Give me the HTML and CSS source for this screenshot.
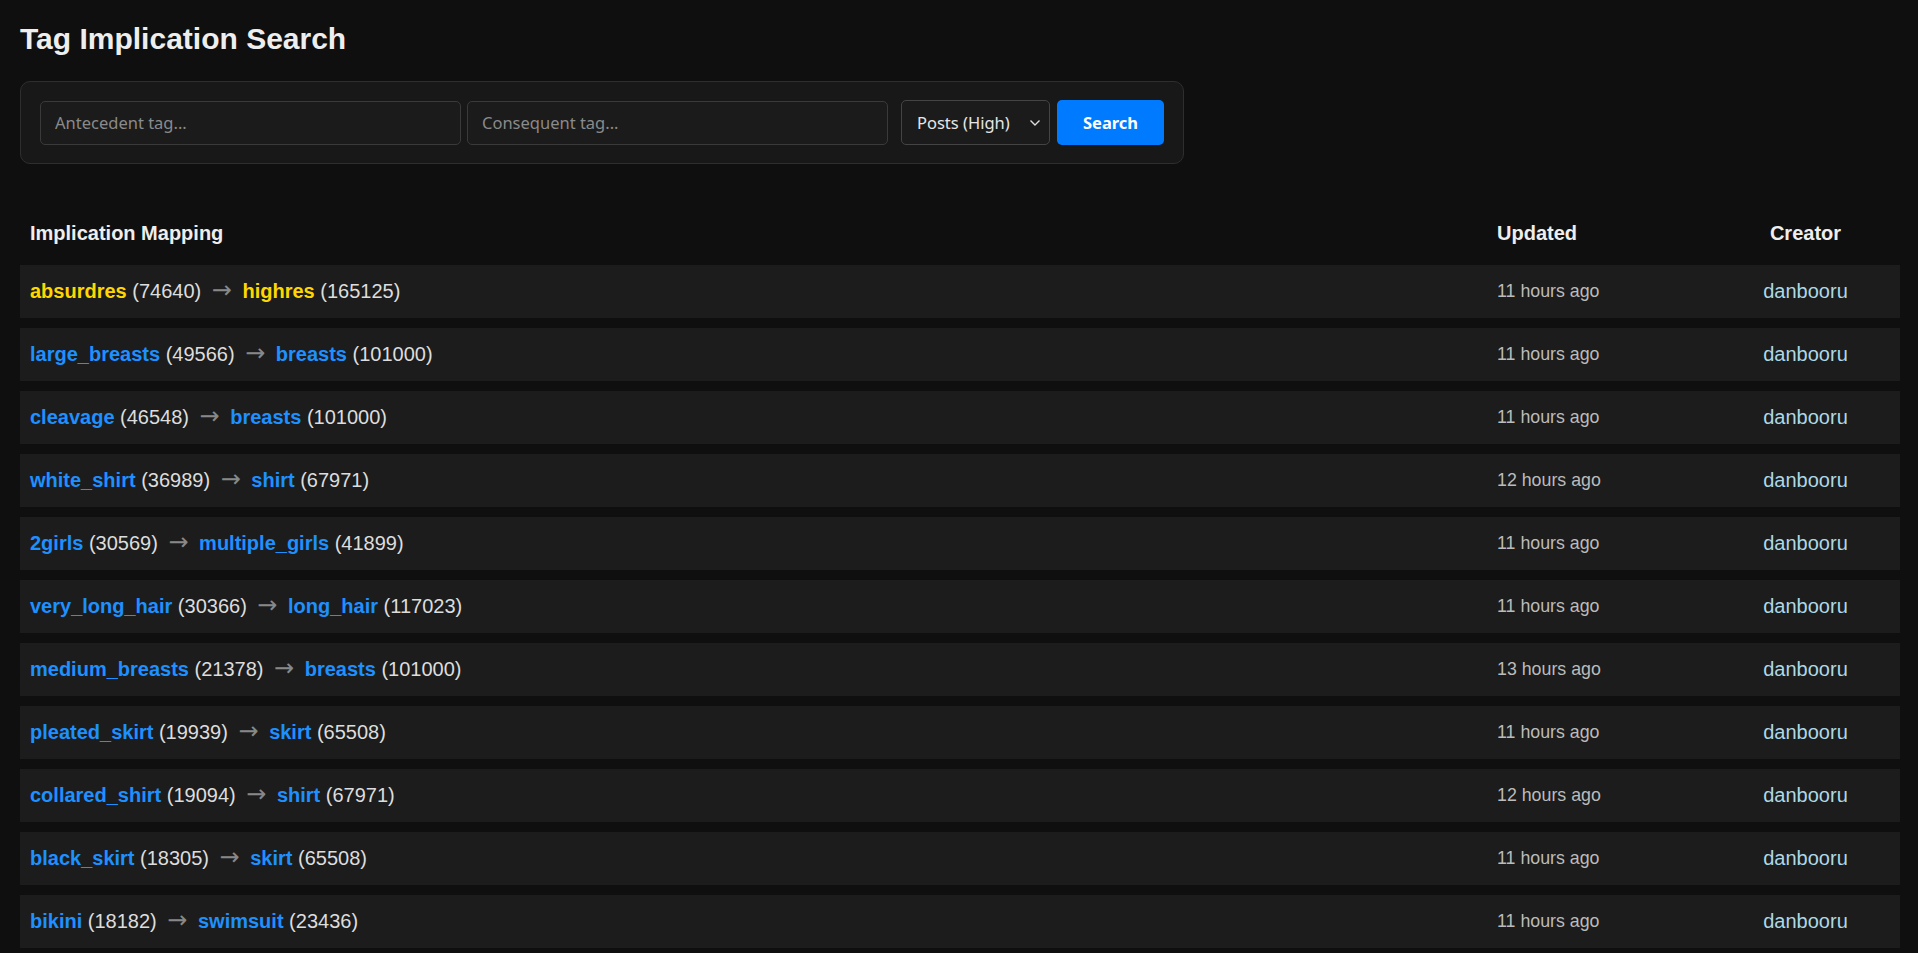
FILE: index.html
```html
<!DOCTYPE html>
<html lang="en">
<head>
    <meta charset="UTF-8">
    <meta name="viewport" content="width=device-width, initial-scale=1.0">
    <title>Tag Implication Search</title>
    <link rel="stylesheet" href="styles.css">
</head>
<body>

<h1>Tag Implication Search</h1>

<form class="search-bar" onsubmit="event.preventDefault()">
    <input type="text" class="tag-input" placeholder="Antecedent tag...">
    <input type="text" class="tag-input" placeholder="Consequent tag...">
    <span class="select-wrap">
        <select class="sort-select">
            <option>Posts (High)</option>
            <option>Posts (Low)</option>
            <option>Newest</option>
            <option>Oldest</option>
        </select>
        <svg class="select-arrow" width="12" height="8" viewBox="0 0 12 8"><path d="M1.5 1.5 L6 6 L10.5 1.5" fill="none" stroke="#ddd" stroke-width="1.4"/></svg>
    </span>
    <button type="submit" class="search-btn">Search</button>
</form>

<table class="results">
    <thead>
        <tr>
            <th>Implication Mapping</th>
            <th class="col-updated">Updated</th>
            <th class="col-creator">Creator</th>
        </tr>
    </thead>
    <tbody>
        <tr>
            <td><a class="tag meta">absurdres</a> (74640) <span class="arrow">→</span> <a class="tag meta">highres</a> (165125)</td>
            <td class="col-updated">11 hours ago</td>
            <td class="col-creator"><a class="creator">danbooru</a></td>
        </tr>
        <tr>
            <td><a class="tag">large_breasts</a> (49566) <span class="arrow">→</span> <a class="tag">breasts</a> (101000)</td>
            <td class="col-updated">11 hours ago</td>
            <td class="col-creator"><a class="creator">danbooru</a></td>
        </tr>
        <tr>
            <td><a class="tag">cleavage</a> (46548) <span class="arrow">→</span> <a class="tag">breasts</a> (101000)</td>
            <td class="col-updated">11 hours ago</td>
            <td class="col-creator"><a class="creator">danbooru</a></td>
        </tr>
        <tr>
            <td><a class="tag">white_shirt</a> (36989) <span class="arrow">→</span> <a class="tag">shirt</a> (67971)</td>
            <td class="col-updated">12 hours ago</td>
            <td class="col-creator"><a class="creator">danbooru</a></td>
        </tr>
        <tr>
            <td><a class="tag">2girls</a> (30569) <span class="arrow">→</span> <a class="tag">multiple_girls</a> (41899)</td>
            <td class="col-updated">11 hours ago</td>
            <td class="col-creator"><a class="creator">danbooru</a></td>
        </tr>
        <tr>
            <td><a class="tag">very_long_hair</a> (30366) <span class="arrow">→</span> <a class="tag">long_hair</a> (117023)</td>
            <td class="col-updated">11 hours ago</td>
            <td class="col-creator"><a class="creator">danbooru</a></td>
        </tr>
        <tr>
            <td><a class="tag">medium_breasts</a> (21378) <span class="arrow">→</span> <a class="tag">breasts</a> (101000)</td>
            <td class="col-updated">13 hours ago</td>
            <td class="col-creator"><a class="creator">danbooru</a></td>
        </tr>
        <tr>
            <td><a class="tag">pleated_skirt</a> (19939) <span class="arrow">→</span> <a class="tag">skirt</a> (65508)</td>
            <td class="col-updated">11 hours ago</td>
            <td class="col-creator"><a class="creator">danbooru</a></td>
        </tr>
        <tr>
            <td><a class="tag">collared_shirt</a> (19094) <span class="arrow">→</span> <a class="tag">shirt</a> (67971)</td>
            <td class="col-updated">12 hours ago</td>
            <td class="col-creator"><a class="creator">danbooru</a></td>
        </tr>
        <tr>
            <td><a class="tag">black_skirt</a> (18305) <span class="arrow">→</span> <a class="tag">skirt</a> (65508)</td>
            <td class="col-updated">11 hours ago</td>
            <td class="col-creator"><a class="creator">danbooru</a></td>
        </tr>
        <tr>
            <td><a class="tag">bikini</a> (18182) <span class="arrow">→</span> <a class="tag">swimsuit</a> (23436)</td>
            <td class="col-updated">11 hours ago</td>
            <td class="col-creator"><a class="creator">danbooru</a></td>
        </tr>
    </tbody>
</table>

</body>
</html>
```

FILE: styles.css
```css
html {
    scrollbar-width: none;
}

* {
    box-sizing: border-box;
}

body {
    margin: 0;
    padding: 22px 18px 20px 20px;
    background-color: #0f0f0f;
    color: #ddd;
    font-family: "Liberation Sans", Arial, sans-serif;
}

h1 {
    margin: 0 0 25px;
    font-size: 30px;
    font-weight: bold;
    color: #eee;
}

/* search form */
.search-bar {
    display: flex;
    align-items: center;
    gap: 6px;
    width: 1164px;
    padding: 18px 19px;
    margin: 0 0 38px;
    background-color: #181818;
    border: 1px solid #2e2e2e;
    border-radius: 10px;
}

.tag-input {
    flex: 1;
    height: 44px;
    padding: 0 14px;
    background-color: #1b1b1b;
    border: 1px solid #3a3a3a;
    border-radius: 5px;
    color: #ddd;
    font-family: "Noto Sans", "Open Sans", sans-serif;
    font-size: 16.5px;
}

.tag-input::placeholder {
    color: #8a8a8a;
}

.tag-input:focus {
    outline: none;
    border-color: #007bff;
}

.select-wrap {
    position: relative;
    margin-left: 7px;
}

.sort-select {
    appearance: none;
    -webkit-appearance: none;
    width: 149px;
    height: 45px;
    padding: 0 30px 0 15px;
    background-color: #1b1b1b;
    border: 1px solid #444;
    border-radius: 5px;
    color: #e6e6e6;
    font-family: "Noto Sans", "Open Sans", sans-serif;
    font-size: 16.5px;
    display: block;
}

.select-arrow {
    position: absolute;
    right: 9px;
    top: 19px;
    pointer-events: none;
}

.search-btn {
    width: 107px;
    height: 45px;
    margin-left: 1px;
    background-color: #007bff;
    border: none;
    border-radius: 5px;
    color: #fff;
    font-family: "Noto Sans", "Open Sans", sans-serif;
    font-size: 16.5px;
    font-weight: bold;
    cursor: pointer;
}

.search-btn:hover {
    background-color: #0069d9;
}

/* results table */
.results {
    width: 100%;
    border-collapse: separate;
    border-spacing: 0 10px;
    font-size: 20px;
}

.results th {
    padding: 10px;
    text-align: left;
    font-weight: bold;
    color: #eee;
}

.results td {
    padding: 15px 10px;
    background-color: #1c1c1c;
    color: #ddd;
    vertical-align: middle;
}

.results .col-updated {
    width: 224px;
}

.results td.col-updated {
    font-size: 17.8px;
    color: #bbb;
}

.results .col-creator {
    width: 189px;
    text-align: center;
}

.tag {
    color: #1e90ff;
    font-weight: bold;
    text-decoration: none;
    cursor: pointer;
}

.tag.meta {
    color: #ffd700;
}

.arrow {
    margin: 0 5px;
    font-family: "DejaVu Sans", sans-serif;
    font-size: 24px;
    line-height: 0;
    color: #888;
}

.creator {
    color: #add8e6;
    text-decoration: none;
    cursor: pointer;
}
```
